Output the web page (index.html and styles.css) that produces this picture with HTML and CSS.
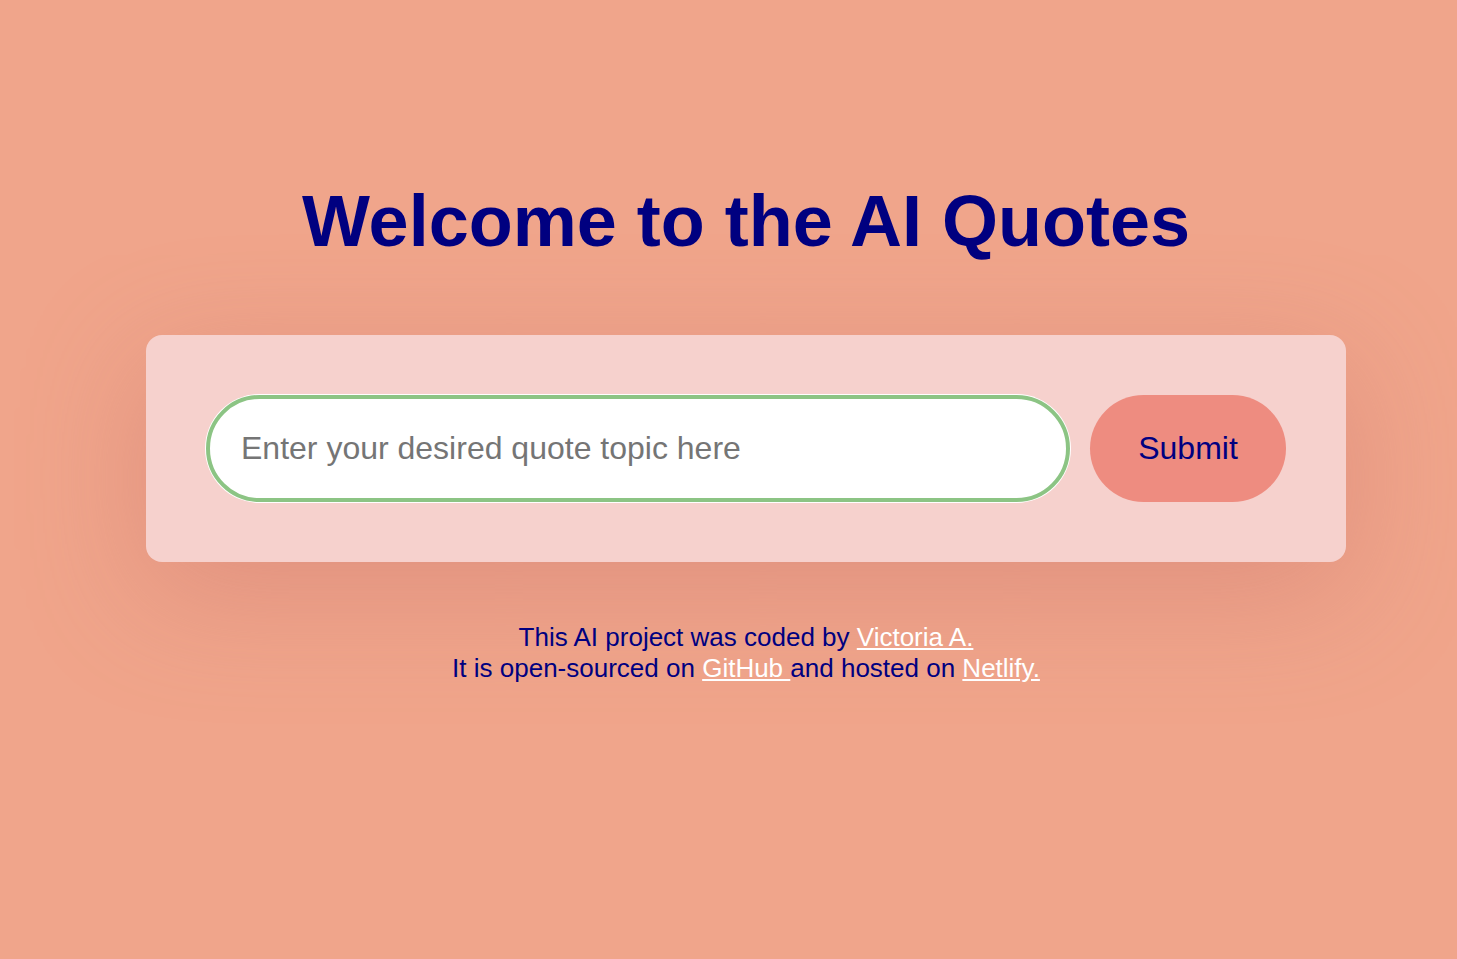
FILE: index.html
```html
<!DOCTYPE html>
<html lang="en">
<head>
<meta charset="utf-8">
<title>AI Quotes</title>
<link rel="stylesheet" href="styles.css">
</head>
<body>
<main class="container">
  <h1 class="title">Welcome to the AI Quotes</h1>
  <form class="card">
    <input class="topic" type="text" placeholder="Enter your desired quote topic here">
    <button class="submit" type="button">Submit</button>
  </form>
  <footer class="footer">
    This AI project was coded by <a href="#">Victoria A.</a><br>
    It is open-sourced on <a href="#">GitHub </a>and hosted on <a href="#">Netlify.</a>
  </footer>
</main>
</body>
</html>
```
FILE: styles.css
```css
html, body {
  margin: 0;
  padding: 0;
}
body {
  background: #F0A58B;
  font-family: "Liberation Sans", Arial, sans-serif;
  color: #000080;
  min-height: 959px;
  padding-left: 35px;
  box-sizing: border-box;
}
.container {
  width: 1200px;
  margin: 0 auto;
  padding-top: 180px;
  display: flex;
  flex-direction: column;
}
.title {
  margin: 0;
  font-size: 72px;
  line-height: 82.8px;
  font-weight: 700;
  text-align: center;
  color: #000080;
}
.card {
  margin: 72px 0 0;
  background: #F6D1CD;
  border-radius: 16px;
  padding: 60px;
  display: flex;
  justify-content: space-between;
  align-items: center;
  box-shadow: 0 30px 120px rgba(205, 120, 110, 0.45);
}
.topic {
  box-sizing: border-box;
  width: 864px;
  height: 107px;
  border: 4px solid #8CC484;
  box-shadow: 0 0 0 1px #ffffff;
  border-radius: 54px;
  background: #ffffff;
  padding: 0 31px;
  font-family: "Liberation Sans", Arial, sans-serif;
  font-size: 32px;
  color: #333;
  outline: none;
}
.topic::placeholder {
  color: #757575;
}
.submit {
  box-sizing: border-box;
  width: 196px;
  height: 107px;
  border: none;
  border-radius: 54px;
  background: #EE8C80;
  color: #000080;
  font-family: "Liberation Sans", Arial, sans-serif;
  font-size: 32px;
  padding: 0;
  cursor: pointer;
}
.footer {
  margin-top: 60px;
  text-align: center;
  font-size: 26px;
  line-height: 31px;
  color: #000080;
}
.footer a {
  color: #ffffff;
  text-decoration: underline;
}
```
